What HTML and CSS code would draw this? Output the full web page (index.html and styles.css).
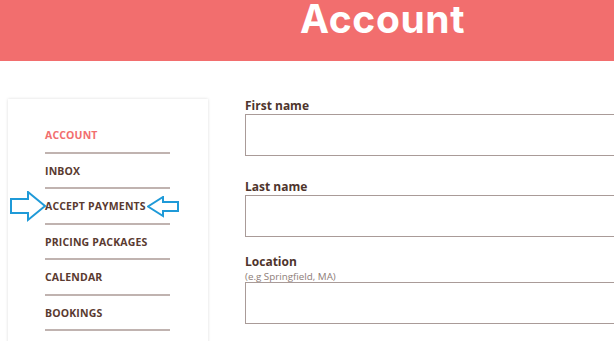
FILE: index.html
```html
<!DOCTYPE html>
<html>
<head>
<meta charset="utf-8">
<link rel="stylesheet" href="styles.css">
</head>
<body>
<header class="hero"><h1 class="hero-title">Account</h1></header>
<main class="layout">
  <aside class="sidebar">
    <nav class="nav">
      <a class="nav-item active">ACCOUNT</a>
      <a class="nav-item">INBOX</a>
      <a class="nav-item marked">ACCEPT PAYMENTS
        <svg class="arrow arrow-right" width="38" height="32" viewBox="0 0 38 32"><path d="M1 8 H18 V1 L35 15 L18 29 V22 H1 Z" fill="#fff" stroke="#1f9ad8" stroke-width="2" stroke-linejoin="miter"/></svg>
        <svg class="arrow arrow-left" width="32" height="22" viewBox="0 0 32 22"><path d="M31 6 H16 V1 L1 10.5 L16 20 V15 H31 Z" fill="#fff" stroke="#1f9ad8" stroke-width="2" stroke-linejoin="miter"/></svg>
      </a>
      <a class="nav-item">PRICING PACKAGES</a>
      <a class="nav-item">CALENDAR</a>
      <a class="nav-item">BOOKINGS</a>
    </nav>
  </aside>
  <section class="form">
    <div class="field">
      <label class="label">First name</label>
      <div class="input"></div>
    </div>
    <div class="field">
      <label class="label">Last name</label>
      <div class="input"></div>
    </div>
    <div class="field field-tight">
      <label class="label label-tall">Location</label>
      <div class="hint">(e.g Springfield, MA)</div>
      <div class="input input-flush"></div>
    </div>
  </section>
</main>
</body>
</html>
```
FILE: styles.css
```css
html, body {
  margin: 0;
  padding: 0;
  background: #fff;
  overflow: hidden;
  height: 341px;
}
body {
  font-family: "Open Sans", "DejaVu Sans", sans-serif;
}
.hero {
  background: #f26e6e;
  height: 61px;
  box-sizing: border-box;
  padding-left: 300px;
}
.hero-title {
  margin: 0;
  color: #fff;
  font-family: Inter, "Open Sans", sans-serif;
  font-weight: 700;
  font-size: 39px;
  line-height: 38px;
  letter-spacing: 0.6px;
}
.layout {
  display: flex;
  padding-top: 38px;
  padding-left: 8px;
  height: 242px;
  overflow: hidden;
}
.sidebar {
  width: 200px;
  flex: 0 0 200px;
  height: 260px;
  background: #fff;
  box-shadow: 0 0 3px rgba(0,0,0,0.14);
  box-sizing: border-box;
  padding: 19px 0 0 37px;
}
.nav {
  display: flex;
  flex-direction: column;
  width: 125px;
}
.nav-item {
  position: relative;
  display: block;
  padding: 12px 0 10px 0;
  line-height: 11.5px;
  font-size: 10.5px;
  font-weight: 700;
  color: #5a3a30;
  border-bottom: 2px solid #c0b3b0;
  white-space: nowrap;
  letter-spacing: 0.15px;
}
.nav-item.active {
  color: #f26e6e;
}
.arrow {
  position: absolute;
  top: 50%;
}
.arrow-right {
  left: -35px;
  margin-top: -15px;
}
.arrow-left {
  left: 102px;
  margin-top: -10px;
}
.form {
  flex: 1;
  padding-left: 37px;
  padding-top: 3px;
  margin-top: -3px;
  overflow: hidden;
}
.field {
  margin-bottom: 24px;
}
.field-tight {
  margin-top: -7px;
}
.label {
  display: block;
  font-size: 12px;
  font-weight: 700;
  color: #4e342c;
  line-height: 14px;
}
.label-tall {
  line-height: 16px;
}
.hint {
  font-size: 9.8px;
  line-height: 11px;
  margin-top: 1.3px;
  color: #8e7d78;
}
.input {
  height: 42px;
  box-sizing: border-box;
  border: 1px solid #a99b98;
  border-right: 0;
  margin-top: 1px;
  width: calc(100% + 10px);
}
.input-flush {
  margin-top: 0;
}
```
